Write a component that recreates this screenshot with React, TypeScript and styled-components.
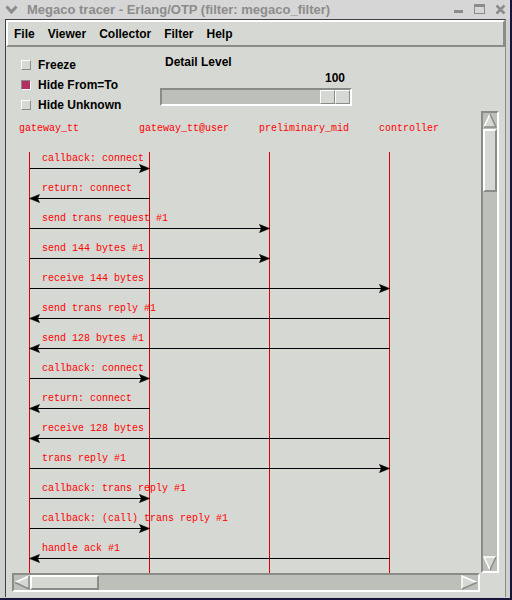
import React from "react";
import styled, { createGlobalStyle } from "styled-components";

const BG = "#d6d9d3";
const TROUGH = "#bcc0b9";
const DARK = "#8a8c88";
const LIGHT = "#ffffff";
const UI_FONT = `"Liberation Sans", Arial, sans-serif`;

const GlobalStyle = createGlobalStyle`
  html, body {
    margin: 0;
    padding: 0;
    background: ${BG};
  }
  body {
    font-family: ${UI_FONT};
  }
`;

const lanes = [
  { name: "gateway_tt", x: 17 },
  { name: "gateway_tt@user", x: 137 },
  { name: "preliminary_mid", x: 257 },
  { name: "controller", x: 377 },
];

// label, from lane, to lane
const messages: [string, number, number][] = [
  ["callback: connect", 0, 1],
  ["return: connect", 1, 0],
  ["send trans request #1", 0, 2],
  ["send 144 bytes #1", 0, 2],
  ["receive 144 bytes", 0, 3],
  ["send trans reply #1", 3, 0],
  ["send 128 bytes #1", 3, 0],
  ["callback: connect", 0, 1],
  ["return: connect", 1, 0],
  ["receive 128 bytes", 3, 0],
  ["trans reply #1", 0, 3],
  ["callback: trans reply #1", 0, 1],
  ["callback: (call) trans reply #1", 0, 1],
  ["handle ack #1", 3, 0],
];

const menuItems = ["File", "Viewer", "Collector", "Filter", "Help"];

const checks = [
  { label: "Freeze", on: false },
  { label: "Hide From=To", on: true },
  { label: "Hide Unknown", on: false },
];

const SequenceChart = () => {
  const first = 57;
  const step = 30;
  return (
    <svg width={469} height={462} fontFamily={`"Liberation Mono", "Courier New", monospace`} fontSize={10}>
      {lanes.map((l) => (
        <g key={l.name}>
          <text x={l.x - 10} y={20} fill="#ff0000">
            {l.name}
          </text>
          <line x1={l.x + 0.5} x2={l.x + 0.5} y1={41} y2={462} stroke="#e00000" strokeWidth={1} shapeRendering="crispEdges" />
        </g>
      ))}
      {messages.map(([label, from, to], i) => {
        const y = first + i * step;
        const x1 = lanes[from].x;
        const x2 = lanes[to].x;
        const dir = x2 > x1 ? 1 : -1;
        const tip = x2 + 0.5;
        return (
          <g key={i}>
            <text x={30} y={y - 7} fill="#ff0000">
              {label}
            </text>
            <line x1={x1 + 0.5} x2={tip - dir * 8} y1={y + 0.5} y2={y + 0.5} stroke="#000" strokeWidth={1} shapeRendering="crispEdges" />
            <polygon
              points={`${tip},${y + 0.5} ${tip - dir * 10},${y - 3.5} ${tip - dir * 8},${y + 0.5} ${tip - dir * 10},${y + 4.5}`}
              fill="#000"
              stroke="#000"
              strokeWidth={0.6}
            />
          </g>
        );
      })}
    </svg>
  );
};

type Dir = "up" | "down" | "left" | "right";

const ArrowGlyph = ({ dir }: { dir: Dir }) => {
  if (dir === "up")
    return (
      <svg width={14} height={16}>
        <polygon points="7,1 13,14 1,14" fill={BG} />
        <polyline points="1,14 7,1" stroke={LIGHT} strokeWidth={1.5} fill="none" />
        <polyline points="7,1 13,14 1,14" stroke={DARK} strokeWidth={1.5} fill="none" />
      </svg>
    );
  if (dir === "down")
    return (
      <svg width={14} height={16}>
        <polygon points="1,2 13,2 7,15" fill={BG} />
        <polyline points="7,15 1,2 13,2" stroke={LIGHT} strokeWidth={1.5} fill="none" />
        <polyline points="13,2 7,15" stroke={DARK} strokeWidth={1.5} fill="none" />
      </svg>
    );
  if (dir === "left")
    return (
      <svg width={16} height={15}>
        <polygon points="1,7.5 15,1 15,14" fill={BG} />
        <polyline points="1,7.5 15,1" stroke={LIGHT} strokeWidth={1.5} fill="none" />
        <polyline points="1,7.5 15,14 15,1" stroke={DARK} strokeWidth={1.5} fill="none" />
      </svg>
    );
  return (
    <svg width={17} height={15}>
      <polygon points="1,1 16,7.5 1,14" fill={BG} />
      <polyline points="1,14 1,1 16,7.5" stroke={LIGHT} strokeWidth={1.5} fill="none" />
      <polyline points="16,7.5 1,14" stroke={DARK} strokeWidth={1.5} fill="none" />
    </svg>
  );
};

const App = () => {
  return (
    <>
      <GlobalStyle />
      <Frame>
        <TitleBar>
          <svg width={13} height={9}>
            <polyline points="1.5,1.5 6.5,7 11.5,1.5" stroke="#8c8c8c" strokeWidth={3} fill="none" />
          </svg>
          <Title>Megaco tracer - Erlang/OTP (filter: megaco_filter)</Title>
          <WinButtons>
            <svg width={11} height={11}>
              <rect x={1} y={6} width={9} height={3} fill="#8c8c8c" />
            </svg>
            <svg width={11} height={11}>
              <rect x={0.5} y={0.5} width={10} height={9} fill="none" stroke="#8c8c8c" />
              <rect x={0} y={0} width={11} height={3} fill="#8c8c8c" />
            </svg>
            <svg width={11} height={11}>
              <path d="M1.5 1.5 L9.5 9.5 M9.5 1.5 L1.5 9.5" stroke="#8c8c8c" strokeWidth={2.5} />
            </svg>
          </WinButtons>
        </TitleBar>
        <Client>
          <MenuBar>
            {menuItems.map((m) => (
              <MenuItem key={m}>{m}</MenuItem>
            ))}
          </MenuBar>
          <Controls>
            <Checks>
              {checks.map((c) => (
                <CheckRow key={c.label}>
                  <CheckBox $on={c.on} />
                  <Label>{c.label}</Label>
                </CheckRow>
              ))}
            </Checks>
            <DetailBox>
              <Label $pad={5}>Detail Level</Label>
              <Value>100</Value>
              <Scale>
                <Handle>
                  <HandleHalf />
                  <HandleHalf />
                </Handle>
              </Scale>
            </DetailBox>
          </Controls>
          <ChartArea>
            <Canvas>
              <SequenceChart />
            </Canvas>
            <VScroll>
              <ArrowBtn>
                <ArrowGlyph dir="up" />
              </ArrowBtn>
              <VThumb />
              <Spacer />
              <ArrowBtn>
                <ArrowGlyph dir="down" />
              </ArrowBtn>
            </VScroll>
            <HScroll>
              <ArrowBtn>
                <ArrowGlyph dir="left" />
              </ArrowBtn>
              <HThumb />
              <Spacer />
              <ArrowBtn>
                <ArrowGlyph dir="right" />
              </ArrowBtn>
            </HScroll>
            <Corner />
          </ChartArea>
        </Client>
      </Frame>
    </>
  );
};

const Frame = styled.div`
  width: 512px;
  height: 600px;
  box-sizing: border-box;
  display: flex;
  flex-direction: column;
  background: #cfcfcf;
  border-right: 2px solid #16163a;
  border-bottom: 2px solid #16163a;
  overflow: hidden;
`;

const TitleBar = styled.div`
  height: 19px;
  flex-shrink: 0;
  display: flex;
  align-items: center;
  padding: 0 4px 0 5px;
  background: #d6d6d6;
`;

const Title = styled.div`
  flex: 1;
  margin-left: 9px;
  font-size: 13px;
  font-weight: bold;
  color: #8c8c8c;
  white-space: nowrap;
`;

const WinButtons = styled.div`
  display: flex;
  gap: 10px;
  align-items: center;
`;

const Client = styled.div`
  flex: 1;
  margin: 0 4px 1px 5px;
  display: flex;
  flex-direction: column;
  background: ${BG};
  border-left: 1px solid #404040;
  border-top: 1px solid #404040;
  border-right: 1px solid ${DARK};
`;

const MenuBar = styled.div`
  height: 27px;
  flex-shrink: 0;
  box-sizing: border-box;
  display: flex;
  align-items: center;
  gap: 13px;
  padding-left: 6px;
  border: 2px solid;
  border-color: ${LIGHT} ${DARK} ${DARK} ${LIGHT};
`;

const MenuItem = styled.span`
  font-size: 12px;
  font-weight: bold;
  color: #000;
`;

const Controls = styled.div`
  height: 64px;
  flex-shrink: 0;
  display: flex;
`;

const Checks = styled.div`
  width: 154px;
  box-sizing: border-box;
  padding: 9px 0 0 15px;
  display: flex;
  flex-direction: column;
  gap: 2px;
`;

const CheckRow = styled.div`
  height: 18px;
  flex-shrink: 0;
  display: flex;
  align-items: center;
  gap: 7px;
`;

const CheckBox = styled.span<{ $on: boolean }>`
  width: 10px;
  height: 10px;
  box-sizing: border-box;
  border: 1px solid;
  border-color: ${(p) => (p.$on ? `${DARK} ${LIGHT} ${LIGHT} ${DARK}` : `${LIGHT} ${DARK} ${DARK} ${LIGHT}`)};
  background: ${(p) => (p.$on ? "#b03060" : BG)};
`;

const Label = styled.span<{ $pad?: number }>`
  display: block;
  height: 16px;
  line-height: 16px;
  padding-left: ${(p) => p.$pad ?? 0}px;
  font-size: 12px;
  font-weight: bold;
  color: #000;
`;

const DetailBox = styled.div`
  width: 192px;
  padding-top: 7px;
  display: flex;
  flex-direction: column;
`;

const Value = styled.div`
  height: 16px;
  line-height: 16px;
  text-align: right;
  padding-right: 7px;
  font-size: 12px;
  font-weight: bold;
`;

const Scale = styled.div`
  margin-top: 2px;
  height: 18px;
  flex-shrink: 0;
  box-sizing: border-box;
  border: 2px solid;
  border-color: ${DARK} ${LIGHT} ${LIGHT} ${DARK};
  background: ${TROUGH};
  display: flex;
  justify-content: flex-end;
`;

const Handle = styled.div`
  display: flex;
  width: 30px;
  height: 14px;
`;

const HandleHalf = styled.div`
  flex: 1;
  box-sizing: border-box;
  border: 1px solid;
  border-color: ${LIGHT} ${DARK} ${DARK} ${LIGHT};
  background: ${BG};
`;

const ChartArea = styled.div`
  margin-left: 6px;
  display: grid;
  grid-template-columns: 469px 18px;
  grid-template-rows: 462px 19px;
`;

const Canvas = styled.div`
  overflow: hidden;
  background: ${BG};
`;

const VScroll = styled.div`
  box-sizing: border-box;
  border: 2px solid;
  border-color: ${DARK} ${LIGHT} ${LIGHT} ${DARK};
  background: ${TROUGH};
  display: flex;
  flex-direction: column;
`;

const HScroll = styled.div`
  width: 468px;
  box-sizing: border-box;
  border: 2px solid;
  border-color: ${DARK} ${LIGHT} ${LIGHT} ${DARK};
  background: ${TROUGH};
  display: flex;
`;

const ArrowBtn = styled.div`
  display: flex;
  align-items: center;
  justify-content: center;
  background: ${TROUGH};
`;

const VThumb = styled.div`
  height: 63px;
  box-sizing: border-box;
  border: 2px solid;
  border-color: ${LIGHT} ${DARK} ${DARK} ${LIGHT};
  background: ${BG};
`;

const HThumb = styled.div`
  width: 69px;
  box-sizing: border-box;
  border: 2px solid;
  border-color: ${LIGHT} ${DARK} ${DARK} ${LIGHT};
  background: ${BG};
`;

const Spacer = styled.div`
  flex: 1;
`;

const Corner = styled.div`
  background: ${BG};
`;

export default App;
